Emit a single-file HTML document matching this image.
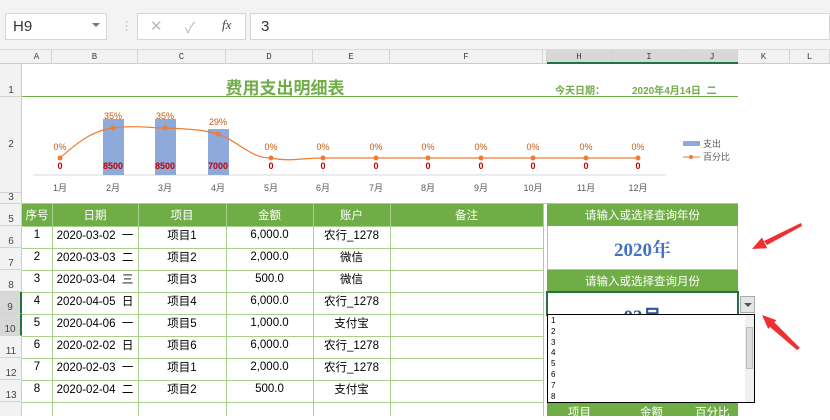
<!DOCTYPE html><html><head><meta charset="utf-8"><style>
*{margin:0;padding:0;box-sizing:border-box}
body{width:830px;height:416px;overflow:hidden;background:#fff;font-family:"Liberation Sans","Noto Sans CJK SC",sans-serif;position:relative;font-size:11.5px;color:#000}
.a{position:absolute}
.c{position:absolute;display:flex;align-items:center;justify-content:center;white-space:nowrap}
.g{background:#70ad47;color:#fff}
.hl{position:absolute;height:1px;background:#a9d08e}
.vl{position:absolute;width:1px;background:#a9d08e}
.ch{position:absolute;top:50px;height:14px;font:9px "Liberation Mono",monospace;color:#444;display:flex;align-items:center;justify-content:center;border-right:1px solid #d4d4d4}
.rh{position:absolute;left:0;width:22px;font-size:10px;color:#444;display:flex;align-items:flex-end;justify-content:center;border-bottom:1px solid #d4d4d4}
</style></head><body>
<div class="a" style="left:0;top:0;width:830px;height:50px;background:#f3f3f3;border-bottom:1px solid #ddd"></div>
<div class="a" style="left:5px;top:13px;width:102px;height:27px;background:#fff;border:1px solid #d6d6d6;font-size:15px;padding:4px 7px;color:#333">H9<span style="position:absolute;right:6px;top:9px;border-left:4px solid transparent;border-right:4px solid transparent;border-top:4px solid #777"></span></div>
<div class="a" style="left:121px;top:18px;color:#bbb">⋮</div>
<div class="a" style="left:137px;top:13px;width:109px;height:27px;background:#fff;border:1px solid #d6d6d6"></div>
<div class="a" style="left:150px;top:17px;color:#bbb;font-size:15px">✕</div>
<div class="a" style="left:185px;top:17px;color:#bbb;font-size:15px">✓</div>
<div class="a" style="left:222px;top:17px;color:#444;font:italic 13px 'Liberation Serif',serif">fx</div>
<div class="a" style="left:250px;top:13px;width:580px;height:27px;background:#fff;border:1px solid #d6d6d6;font-size:15px;padding:4px 10px;color:#333">3</div>
<div class="a" style="left:0;top:50px;width:830px;height:14px;background:#f2f2f2;border-bottom:1px solid #ccc"></div>
<div class="a" style="left:0;top:64px;width:22px;height:352px;background:#f2f2f2;border-right:1px solid #ccc"></div>
<div class="ch" style="left:22px;width:30px">A</div><div class="ch" style="left:52px;width:86px">B</div><div class="ch" style="left:138px;width:88px">C</div><div class="ch" style="left:226px;width:87px">D</div><div class="ch" style="left:313px;width:77px">E</div><div class="ch" style="left:390px;width:153px">F</div><div class="ch" style="left:543px;width:4px"></div>
<div class="ch" style="left:547px;width:65px;background:#d8d8d8">H</div><div class="ch" style="left:612px;width:75px;background:#d8d8d8">I</div><div class="ch" style="left:687px;width:51px;background:#d8d8d8">J</div>
<div class="a" style="left:547px;top:62px;width:191px;height:2px;background:#217346"></div>
<div class="ch" style="left:738px;width:52px">K</div><div class="ch" style="left:790px;width:40px">L</div>
<div class="rh" style="top:64px;height:33px">1</div><div class="rh" style="top:97px;height:96px;align-items:center">2</div><div class="rh" style="top:193px;height:11px">3</div>
<div class="rh" style="top:204px;height:22px">5</div><div class="rh" style="top:226px;height:22px">6</div><div class="rh" style="top:248px;height:22px">7</div><div class="rh" style="top:270px;height:22px">8</div>
<div class="rh" style="top:292px;height:22px;background:#d8d8d8;border-right:2px solid #217346">9</div><div class="rh" style="top:314px;height:22px;background:#d8d8d8;border-right:2px solid #217346">10</div>
<div class="rh" style="top:336px;height:22px">11</div><div class="rh" style="top:358px;height:22px">12</div><div class="rh" style="top:380px;height:22px">13</div>
<div class="c" style="left:200px;top:74px;width:170px;height:24px;color:#70ad47;font-weight:bold;font-size:17px">费用支出明细表</div>
<div class="a" style="left:555px;top:82px;color:#70ad47;font-weight:bold;font-size:10px">今天日期：</div>
<div class="a" style="left:632px;top:82px;color:#70ad47;font-weight:bold;font-size:10px">2020年4月14日 &nbsp;二</div>
<div class="a" style="left:22px;top:96px;width:716px;height:1px;background:#70ad47"></div>
<div class="a" style="left:22px;top:203px;width:716px;height:1px;background:#a9d08e"></div>
<svg class="a" style="left:0;top:0" width="830" height="416">
<line x1="33" y1="175" x2="666" y2="175" stroke="#d9d9d9"/>
<rect x="103" y="119" width="21" height="56" fill="#8eaadb"/><rect x="155" y="119" width="21" height="56" fill="#8eaadb"/><rect x="208" y="129" width="21" height="46" fill="#8eaadb"/>
<path d="M60,158 C80,140 95,130 113,128 C135,125 150,128 165,128 C190,129 205,130 218,134 C240,142 250,158 271,158 C290,162 300,158 323,158 L638,158" fill="none" stroke="#ed7d31" stroke-width="1.2"/>
<g fill="#ed7d31"><circle cx="60" cy="158" r="2.5"/><circle cx="113" cy="128" r="2.5"/><circle cx="165" cy="128" r="2.5"/><circle cx="218" cy="134" r="2.5"/><circle cx="271" cy="158" r="2.5"/><circle cx="323" cy="158" r="2.5"/><circle cx="376" cy="158" r="2.5"/><circle cx="428" cy="158" r="2.5"/><circle cx="481" cy="158" r="2.5"/><circle cx="533" cy="158" r="2.5"/><circle cx="586" cy="158" r="2.5"/><circle cx="638" cy="158" r="2.5"/></g>
<g font-size="9" fill="#c55a11" text-anchor="middle" font-family="Liberation Sans"><text x="60" y="150">0%</text><text x="113" y="119">35%</text><text x="165" y="119">35%</text><text x="218" y="125">29%</text><text x="271" y="150">0%</text><text x="323" y="150">0%</text><text x="376" y="150">0%</text><text x="428" y="150">0%</text><text x="481" y="150">0%</text><text x="533" y="150">0%</text><text x="586" y="150">0%</text><text x="638" y="150">0%</text></g>
<g font-size="9" fill="#c00000" font-weight="bold" text-anchor="middle" font-family="Liberation Sans"><text x="60" y="169">0</text><text x="113" y="169">8500</text><text x="165" y="169">8500</text><text x="218" y="169">7000</text><text x="271" y="169">0</text><text x="323" y="169">0</text><text x="376" y="169">0</text><text x="428" y="169">0</text><text x="481" y="169">0</text><text x="533" y="169">0</text><text x="586" y="169">0</text><text x="638" y="169">0</text></g>
<g font-size="9" fill="#595959" text-anchor="middle" font-family="Liberation Sans,Noto Sans CJK SC"><text x="60" y="191">1月</text><text x="113" y="191">2月</text><text x="165" y="191">3月</text><text x="218" y="191">4月</text><text x="271" y="191">5月</text><text x="323" y="191">6月</text><text x="376" y="191">7月</text><text x="428" y="191">8月</text><text x="481" y="191">9月</text><text x="533" y="191">10月</text><text x="586" y="191">11月</text><text x="638" y="191">12月</text></g>
<rect x="683" y="141" width="17" height="5" fill="#8eaadb"/><text x="703" y="147" font-size="9" fill="#595959" font-family="Noto Sans CJK SC">支出</text>
<line x1="683" y1="157" x2="700" y2="157" stroke="#ed7d31"/><circle cx="691" cy="157" r="2" fill="#ed7d31"/><text x="703" y="160" font-size="9" fill="#595959" font-family="Noto Sans CJK SC">百分比</text>
<polygon points="801,223 802,226 767,245 764,241" fill="#f03030"/>
<polygon points="752,249 767.2,248.2 762,237.4" fill="#f03030"/>
<polygon points="800,348 797,350 770,327 774,322" fill="#f03030"/>
<polygon points="762,315 776.4,320.1 768.2,328.9" fill="#f03030"/>
</svg>
<div class="a g" style="left:22px;top:204px;width:521px;height:22px"></div>
<div class="c" style="left:22px;top:204px;width:30px;height:22px;color:#fff">序号</div><div class="c" style="left:52px;top:204px;width:86px;height:22px;color:#fff">日期</div><div class="c" style="left:138px;top:204px;width:88px;height:22px;color:#fff">项目</div><div class="c" style="left:226px;top:204px;width:87px;height:22px;color:#fff">金额</div><div class="c" style="left:313px;top:204px;width:77px;height:22px;color:#fff">账户</div><div class="c" style="left:390px;top:204px;width:153px;height:22px;color:#fff">备注</div>
<div class="vl" style="left:52px;top:204px;height:212px"></div><div class="vl" style="left:138px;top:204px;height:212px"></div><div class="vl" style="left:226px;top:204px;height:212px"></div><div class="vl" style="left:313px;top:204px;height:212px"></div><div class="vl" style="left:390px;top:204px;height:212px"></div><div class="vl" style="left:543px;top:204px;height:212px"></div>
<div class="hl" style="left:22px;top:226px;width:521px"></div><div class="hl" style="left:22px;top:248px;width:521px"></div><div class="hl" style="left:22px;top:270px;width:521px"></div><div class="hl" style="left:22px;top:292px;width:521px"></div><div class="hl" style="left:22px;top:314px;width:521px"></div><div class="hl" style="left:22px;top:336px;width:521px"></div><div class="hl" style="left:22px;top:358px;width:521px"></div><div class="hl" style="left:22px;top:380px;width:521px"></div><div class="hl" style="left:22px;top:402px;width:521px"></div>
<div id="rows"></div>
<script>
var d=[["1","2020-03-02 &nbsp;一","项目1","6,000.0","农行_1278"],["2","2020-03-03 &nbsp;二","项目2","2,000.0","微信"],["3","2020-03-04 &nbsp;三","项目3","500.0","微信"],["4","2020-04-05 &nbsp;日","项目4","6,000.0","农行_1278"],["5","2020-04-06 &nbsp;一","项目5","1,000.0","支付宝"],["6","2020-02-02 &nbsp;日","项目6","6,000.0","农行_1278"],["7","2020-02-03 &nbsp;一","项目1","2,000.0","农行_1278"],["8","2020-02-04 &nbsp;二","项目2","500.0","支付宝"]];
var x=[22,52,138,226,313],w=[30,86,88,87,77],h="";
d.forEach(function(r,i){r.forEach(function(t,j){h+='<div class="c" style="left:'+x[j]+'px;top:'+(225+i*22)+'px;width:'+w[j]+'px;height:20px">'+t+'</div>'})});
document.getElementById("rows").innerHTML=h;
</script>
<div class="c g" style="left:547px;top:204px;width:191px;height:22px">请输入或选择查询年份</div>
<div class="a" style="left:547px;top:226px;width:191px;height:44px;border:1px solid #a9d08e;border-top:0"></div>
<div class="c" style="left:547px;top:236px;width:191px;height:24px;color:#4472c4;font:bold 19px 'Liberation Serif','Noto Serif CJK SC',serif">2020年</div>
<div class="c g" style="left:547px;top:270px;width:191px;height:22px">请输入或选择查询月份</div>
<div class="a" style="left:546px;top:291px;width:193px;height:25px;border:2px solid #217346;border-bottom:0"></div>
<div class="c" style="left:547px;top:302px;width:191px;height:14px;overflow:hidden;align-items:flex-start;color:#2f5597;font:bold 19px 'Liberation Serif',serif">03月</div>
<div class="a" style="left:740px;top:296px;width:15px;height:17px;background:#e6e6e6;border:1px solid #aaa"><span style="position:absolute;left:3px;top:6px;border-left:4px solid transparent;border-right:4px solid transparent;border-top:4px solid #555"></span></div>
<div class="a" style="left:547px;top:314px;width:208px;height:89px;background:#fff;border:1px solid #000;font-size:8px;line-height:10.8px;padding:1px 3px">1<br>2<br>3<br>4<br>5<br>6<br>7<br>8</div>
<div class="a" style="left:745px;top:315px;width:9px;height:87px;background:#f0f0f0"></div>
<div class="a" style="left:746px;top:327px;width:7px;height:42px;background:#dcdcdc;border:1px solid #bbb"></div>
<div class="a g" style="left:547px;top:403px;width:191px;height:13px"></div>
<div class="a" style="left:568px;top:404px;color:#fff">项目</div><div class="a" style="left:640px;top:404px;color:#fff">金额</div><div class="a" style="left:695px;top:404px;color:#fff">百分比</div>
</body></html>
